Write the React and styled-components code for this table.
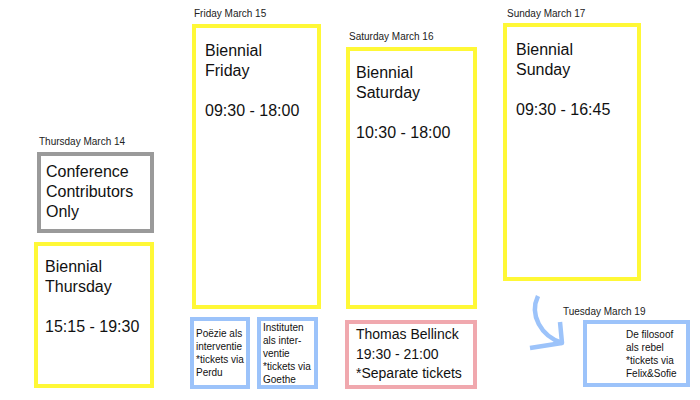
import React from "react";
import styled, {createGlobalStyle} from "styled-components";

const GlobalStyle = createGlobalStyle`
  body {
    margin: 0;
    background: #fff;
    font-family: "Liberation Sans", Arial, sans-serif;
    color: #111;
  }
`;

const YELLOW = "#fff836";
const GRAY = "#9a9a9a";
const BLUE = "#9cc3fa";
const PINK = "#f0a8ae";

const Board = styled.div`
  width: 700px;
  height: 400px;
  box-sizing: border-box;
  padding-left: 34px;
  display: flex;
  align-items: flex-start;
  overflow: hidden;
`;

const Column = styled.div`
  display: flex;
  flex-direction: column;
  align-items: flex-start;
  margin-top: ${p => p.$top}px;
  margin-left: ${p => p.$gap || 0}px;
`;

const DayLabel = styled.div`
  font-size: 10px;
  line-height: 12px;
  color: #222;
  white-space: nowrap;
  margin-left: ${p => p.$indent || 0}px;
`;

const Slot = styled.div`
  box-sizing: border-box;
  width: ${p => p.$w}px;
  height: ${p => p.$h}px;
  margin-top: ${p => p.$mt || 0}px;
  margin-left: ${p => p.$ml || 0}px;
  border: 4px solid ${p => p.$color};
  padding: ${p => p.$pad || "0"};
  font-size: 16px;
  line-height: 20px;
  white-space: nowrap;
`;

const SmallSlot = styled(Slot)`
  display: flex;
  align-items: center;
  font-size: 10px;
  line-height: 13px;
`;

const TicketSlot = styled(Slot)`
  display: flex;
  align-items: center;
  font-size: 14px;
  line-height: 19.5px;
`;

const SideRow = styled.div`
  display: flex;
  gap: 7px;
  margin-top: 8px;
`;

const LowerRow = styled.div`
  display: flex;
  align-items: flex-start;
  margin-top: 12px;
  margin-left: 24px;
`;

const Extra = styled.div`
  display: flex;
  flex-direction: column;
  align-items: flex-start;
  padding-top: 13px;
`;

const Lines = ({items}) => (
    <div>
        {items.map((t, i) => <div key={i}>{t || "\u00a0"}</div>)}
    </div>
);

const Arrow = () => (
    <svg width="36" height="60" viewBox="0 0 36 60" style={{overflow: "visible"}}>
        <g fill="none" stroke={BLUE} strokeWidth="4.5" strokeLinecap="butt" strokeLinejoin="round">
            <path d="M11 3 C 2 22, 14 43, 35 50"/>
            <path d="M33 29 L35 50 L3 55"/>
        </g>
    </svg>
);

export default function App() {
    return (
        <>
            <GlobalStyle/>
            <Board>
                <Column $top={136}>
                    <DayLabel $indent={5}>Thursday March 14</DayLabel>
                    <Slot $color={GRAY} $w={117} $h={81} $mt={4} $ml={3} $pad="6px 5px">
                        <Lines items={["Conference", "Contributors", "Only"]}/>
                    </Slot>
                    <Slot $color={YELLOW} $w={120} $h={146} $mt={9} $pad="11px 7px">
                        <Lines items={["Biennial", "Thursday", "", "15:15 - 19:30"]}/>
                    </Slot>
                </Column>

                <Column $top={8} $gap={36}>
                    <DayLabel $indent={4}>Friday March 15</DayLabel>
                    <Slot $color={YELLOW} $w={129} $h={285} $mt={4} $ml={2} $pad="13px 9px">
                        <Lines items={["Biennial", "Friday", "", "09:30 - 18:00"]}/>
                    </Slot>
                    <SideRow>
                        <SmallSlot $color={BLUE} $w={60} $h={72} $pad="0 2px">
                            <Lines items={["Poëzie als", "interventie", "*tickets via", "Perdu"]}/>
                        </SmallSlot>
                        <SmallSlot $color={BLUE} $w={61} $h={72} $pad="0 2px">
                            <Lines items={["Instituten", "als inter-", "ventie", "*tickets via", "Goethe"]}/>
                        </SmallSlot>
                    </SideRow>
                </Column>

                <Column $top={31} $gap={24}>
                    <DayLabel $indent={4}>Saturday March 16</DayLabel>
                    <Slot $color={YELLOW} $w={131} $h={262} $mt={4} $ml={1} $pad="12px 6px">
                        <Lines items={["Biennial", "Saturday", "", "10:30 - 18:00"]}/>
                    </Slot>
                    <TicketSlot $color={PINK} $w={132} $h={69} $mt={11} $pad="0 7px">
                        <Lines items={["Thomas Bellinck", "19:30 - 21:00", "*Separate tickets"]}/>
                    </TicketSlot>
                </Column>

                <Column $top={8} $gap={26}>
                    <DayLabel $indent={4}>Sunday March 17</DayLabel>
                    <Slot $color={YELLOW} $w={138} $h={258} $mt={3} $pad="13px 9px">
                        <Lines items={["Biennial", "Sunday", "", "09:30 - 16:45"]}/>
                    </Slot>
                    <LowerRow>
                        <Arrow/>
                        <Extra>
                            <DayLabel>Tuesday March 19</DayLabel>
                            <SmallSlot $color={BLUE} $w={107} $h={67} $mt={2} $ml={20} $pad="0 0 0 39px">
                                <Lines items={["De filosoof", "als rebel", "*tickets via", "Felix&Sofie"]}/>
                            </SmallSlot>
                        </Extra>
                    </LowerRow>
                </Column>
            </Board>
        </>
    );
}
